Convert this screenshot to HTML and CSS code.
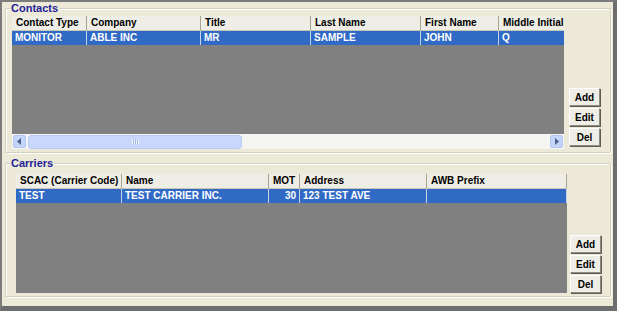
FILE: index.html
```html
<!DOCTYPE html>
<html lang="en">
<head>
    <meta charset="UTF-8">
    <title>Contacts and Carriers</title>
    <link rel="stylesheet" href="styles.css">
</head>
<body>
    <div class="window">

        <!-- Contacts -->
        <fieldset class="group">
            <legend>Contacts</legend>
            <div class="group-body contacts-body">
                <div class="grid contacts-grid">
                    <div class="grid-head">
                        <div class="cell">Contact Type</div>
                        <div class="cell">Company</div>
                        <div class="cell">Title</div>
                        <div class="cell">Last Name</div>
                        <div class="cell">First Name</div>
                        <div class="cell">Middle Initial</div>
                    </div>
                    <div class="grid-row selected">
                        <div class="cell">MONITOR</div>
                        <div class="cell">ABLE INC</div>
                        <div class="cell">MR</div>
                        <div class="cell">SAMPLE</div>
                        <div class="cell">JOHN</div>
                        <div class="cell">Q</div>
                    </div>
                    <div class="grid-fill"></div>
                    <div class="hscroll">
                        <div class="scroll-btn">
                            <svg width="5" height="7" viewBox="0 0 5 7"><path d="M4 0 L0 3.5 L4 7 Z" fill="#4d6185"/></svg>
                        </div>
                        <div class="scroll-thumb"><span class="grip"></span></div>
                        <div class="scroll-track"></div>
                        <div class="scroll-btn">
                            <svg width="5" height="7" viewBox="0 0 5 7"><path d="M1 0 L5 3.5 L1 7 Z" fill="#4d6185"/></svg>
                        </div>
                    </div>
                </div>
                <div class="btns">
                    <button>Add</button>
                    <button>Edit</button>
                    <button>Del</button>
                </div>
            </div>
        </fieldset>

        <!-- Carriers -->
        <fieldset class="group carriers">
            <legend>Carriers</legend>
            <div class="group-body carriers-body">
                <div class="grid carriers-grid">
                    <div class="grid-head">
                        <div class="cell">SCAC (Carrier Code)</div>
                        <div class="cell">Name</div>
                        <div class="cell">MOT</div>
                        <div class="cell">Address</div>
                        <div class="cell">AWB Prefix</div>
                    </div>
                    <div class="grid-row selected">
                        <div class="cell">TEST</div>
                        <div class="cell">TEST CARRIER INC.</div>
                        <div class="cell num">30</div>
                        <div class="cell">123 TEST AVE</div>
                        <div class="cell"></div>
                    </div>
                    <div class="grid-fill"></div>
                </div>
                <div class="btns">
                    <button>Add</button>
                    <button>Edit</button>
                    <button>Del</button>
                </div>
            </div>
        </fieldset>

    </div>
</body>
</html>
```

FILE: styles.css
```css
body {
    margin: 0;
    font-family: "Liberation Sans", Arial, sans-serif;
    font-size: 10px;
    font-weight: bold;
    color: #000;
    background: #ece9d8;
}

.window {
    box-sizing: border-box;
    width: 617px;
    height: 311px;
    padding: 0 2px 0 3px;
    background: #ece9d8;
    border-top: 2px solid #7c7c7c;
    border-left: 2px solid #7c7c7c;
    border-right: 4px solid #6e6e6e;
    border-bottom: 5px solid #6e6e6e;
    display: flex;
    flex-direction: column;
}

.group {
    min-width: 0;
    margin: 0;
    padding: 0;
    border: 1px solid #d0d0bf;
    border-radius: 2px;
    box-shadow: inset 1px 1px 0 #fff, 1px 1px 0 #fff;
}

.group.carriers {
    margin-top: 4px;
}

.group legend {
    margin-left: 4px;
    padding: 0 1px;
    line-height: 12px;
    font-size: 11px;
    color: #1f2396;
    background: #ece9d8;
}

.group-body {
    display: flex;
    align-items: stretch;
}

.contacts-body {
    padding: 2px 10px 3px 6px;
    gap: 5px;
}

.carriers-body {
    padding: 5px 9px 3px 10px;
    gap: 3px;
}

/* data grids */
.grid {
    flex: 1;
    min-width: 0;
    display: flex;
    flex-direction: column;
    overflow: hidden;
}

.contacts-grid {
    height: 133px;
}

.carriers-grid {
    height: 119px;
}

.grid-head, .grid-row {
    display: grid;
}

.contacts-grid .grid-head, .contacts-grid .grid-row {
    grid-template-columns: 75px 114px 110px 110px 78px 80px;
}

.carriers-grid .grid-head, .carriers-grid .grid-row {
    grid-template-columns: 106px 147px 31px 127px 140px;
}

.cell {
    box-sizing: border-box;
    padding-left: 3px;
    white-space: nowrap;
    overflow: hidden;
}

.grid-head {
    height: 15px;
    background: #efeee6;
}

.grid-head .cell {
    line-height: 14px;
    padding-left: 4px;
    border-right: 1px solid #a8a594;
    border-bottom: 1px solid #c9c6b6;
}

.grid-row {
    height: 14px;
}

.grid-row .cell {
    line-height: 14px;
    border-right: 1px solid #c8d3e6;
}

.grid-row.selected {
    background: #316ac5;
    color: #fff;
}

.cell.num {
    text-align: right;
    padding-right: 3px;
}

.grid-fill {
    flex: 1;
    background: #808080;
}

/* horizontal scrollbar */
.hscroll {
    height: 15px;
    display: flex;
    align-items: center;
    gap: 2px;
    padding: 0 1px;
    background: #f5f5f1;
}

.scroll-btn {
    width: 11px;
    height: 11px;
    display: flex;
    align-items: center;
    justify-content: center;
    background: #c4d4fb;
    border: 1px solid #b4c7f3;
    border-radius: 2px;
}

.scroll-thumb {
    width: 212px;
    height: 12px;
    display: flex;
    align-items: center;
    justify-content: center;
    background: #c8d7fb;
    border: 1px solid #b8caf4;
    border-radius: 3px;
}

.grip {
    width: 7px;
    height: 5px;
    background: repeating-linear-gradient(90deg, #eef3fe 0 1px, #a3b8e6 1px 2px);
}

.scroll-track {
    flex: 1;
}

/* side buttons */
.btns {
    width: 31px;
    display: flex;
    flex-direction: column;
    justify-content: flex-end;
    gap: 2px;
}

.contacts-body .btns {
    padding-bottom: 3px;
}

.btns button {
    height: 18px;
    padding: 0;
    font-family: inherit;
    font-size: 10px;
    font-weight: bold;
    color: #000;
    background: #efeee6;
    border: 1px solid;
    border-color: #fff #8d8b7f #8d8b7f #fff;
    box-shadow: 1px 1px 0 #5e5d56;
    cursor: pointer;
}
```
